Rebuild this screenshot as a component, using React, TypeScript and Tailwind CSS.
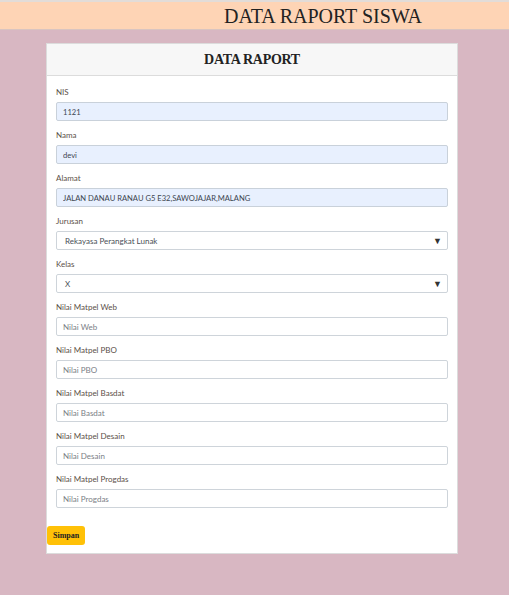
import React from 'react';

interface Field {
  label: string;
  value?: string;
  placeholder?: string;
  kind: 'filled' | 'select' | 'empty';
}

const FIELDS: Field[] = [
  { label: 'NIS', value: '1121', kind: 'filled' },
  { label: 'Nama', value: 'devi', kind: 'filled' },
  { label: 'Alamat', value: 'JALAN DANAU RANAU G5 E32,SAWOJAJAR,MALANG', kind: 'filled' },
  { label: 'Jurusan', value: 'Rekayasa Perangkat Lunak', kind: 'select' },
  { label: 'Kelas', value: 'X', kind: 'select' },
  { label: 'Nilai Matpel Web', placeholder: 'Nilai Web', kind: 'empty' },
  { label: 'Nilai Matpel PBO', placeholder: 'Nilai PBO', kind: 'empty' },
  { label: 'Nilai Matpel Basdat', placeholder: 'Nilai Basdat', kind: 'empty' },
  { label: 'Nilai Matpel Desain', placeholder: 'Nilai Desain', kind: 'empty' },
  { label: 'Nilai Matpel Progdas', placeholder: 'Nilai Progdas', kind: 'empty' },
];

const FormRow: React.FC<{ field: Field }> = ({ field }) => {
  return (
    <div className="mb-[8px]">
      <label className="block h-[12px] leading-[12px] mb-[4px] text-[8px] text-[#5b5048]">{field.label}</label>
      {field.kind === 'select' ? (
        <div className="flex items-center justify-between h-[19px] pl-[8px] pr-[5px] bg-white border border-[#ced4da] rounded-[2px] text-[8px] text-[#495057]">
          <span>{field.value}</span>
          <span className="text-[9px] leading-none text-[#333]">▼</span>
        </div>
      ) : (
        <input
          readOnly
          defaultValue={field.value}
          placeholder={field.placeholder}
          className={
            'block w-full h-[19px] px-[6px] border rounded-[2px] outline-none placeholder:text-[#7b8086] ' +
            (field.kind === 'filled'
              ? 'bg-[#e8f0fe] border-[#c9d1da] text-[#3c4650] text-[7.6px]'
              : 'bg-white border-[#ced4da] text-[#495057] text-[8px]')
          }
        />
      )}
    </div>
  );
};

export default function App() {
  return (
    <div className="min-h-[595px] bg-[#d8b7c2] font-['Lato',sans-serif]">
      <header className="h-[30px] bg-[#fed4b5] border-t-[2px] border-t-[#e2dcd8] border-b border-b-[#d9c4c0] pl-[224px] flex items-center">
        <h1 className="font-['Liberation_Serif',serif] text-[20px] leading-none text-[#222]">DATA RAPORT SISWA</h1>
      </header>

      <div className="pt-[13px] px-[46px] pb-[42px]">
        <div className="w-[412px] bg-white border border-[#dcdcdc]">
          <div className="h-[32px] flex items-center justify-center bg-[#f7f7f7] border-b border-[#dcdcdc]">
            <h2 className="font-['Liberation_Serif',serif] font-bold text-[14px] tracking-[-0.02em] text-[#222]">DATA RAPORT</h2>
          </div>
          <form className="px-[9px] pt-[10px]">
            {FIELDS.map((f) => (
              <FormRow key={f.label} field={f} />
            ))}
          </form>
          <div className="flex pt-[10px] pb-[8px]">
            <button
              type="button"
              className="h-[19px] px-[6px] bg-[#ffc107] rounded-[3px] font-['Liberation_Serif',serif] font-bold text-[8px] text-[#222]"
            >
              Simpan
            </button>
          </div>
        </div>
      </div>
    </div>
  );
}
